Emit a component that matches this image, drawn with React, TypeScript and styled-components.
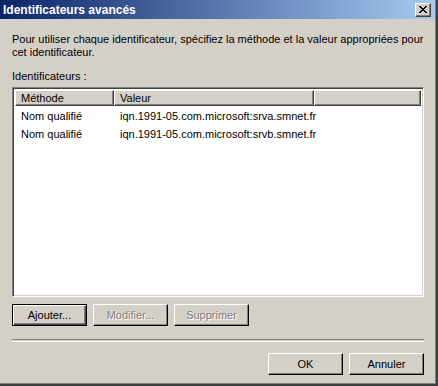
import React from 'react';
import styled, { createGlobalStyle } from 'styled-components';

const GlobalStyle = createGlobalStyle`
  html, body {
    margin: 0;
    padding: 0;
    background: #d4d0c8;
  }
`;

const Window = styled.div`
  width: 438px;
  height: 386px;
  box-sizing: border-box;
  background: #d4d0c8;
  border-right: 2px solid #404040;
  border-bottom: 2px solid #404040;
  box-shadow: inset -1px -1px 0 #808080;
  display: flex;
  flex-direction: column;
  font-family: 'Liberation Sans', Arial, sans-serif;
  font-size: 11px;
  color: #000;
`;

const TitleBar = styled.div`
  height: 19px;
  margin-right: 1px;
  background: linear-gradient(to right, #0a246a, #a6caf0);
  display: flex;
  align-items: center;
  justify-content: space-between;
  padding: 0 4px 0 3px;
`;

const TitleText = styled.div`
  color: #fff;
  font-weight: bold;
  font-size: 12px;
`;

const CloseButton = styled.div`
  width: 16px;
  height: 14px;
  box-sizing: border-box;
  background: #d4d0c8;
  border-top: 1px solid #fff;
  border-left: 1px solid #fff;
  border-right: 1px solid #404040;
  border-bottom: 1px solid #404040;
  box-shadow: inset -1px -1px 0 #808080;
  display: flex;
  align-items: center;
  justify-content: center;
`;

const Body = styled.div`
  flex: 1;
  display: flex;
  flex-direction: column;
  padding: 14px 12px 0 12px;
`;

const Text = styled.div<{ $gap?: number }>`
  line-height: 13px;
  margin-top: ${(p) => p.$gap ?? 0}px;
`;

const ListBox = styled.div`
  margin-top: 4px;
  height: 210px;
  box-sizing: border-box;
  background: #fff;
  border-top: 1px solid #808080;
  border-left: 1px solid #808080;
  border-right: 1px solid #fff;
  border-bottom: 1px solid #fff;
  box-shadow: inset 1px 1px 0 #404040, inset -1px -1px 0 #d4d0c8;
  padding: 2px;
  display: flex;
  flex-direction: column;
`;

const HeaderRow = styled.div`
  display: flex;
  height: 16px;
  margin-bottom: 1px;
`;

const HeaderCell = styled.div<{ $w?: number }>`
  ${(p) => (p.$w ? `width: ${p.$w}px;` : 'flex: 1;')}
  box-sizing: border-box;
  background: #d4d0c8;
  border-top: 1px solid #fff;
  border-left: 1px solid #fff;
  border-right: 1px solid #404040;
  border-bottom: 1px solid #404040;
  box-shadow: inset -1px -1px 0 #808080;
  padding-left: 5px;
  display: flex;
  align-items: center;
`;

const Row = styled.div`
  display: flex;
  height: 18px;
  align-items: center;
`;

const Cell = styled.div<{ $w: number }>`
  width: ${(p) => p.$w}px;
  padding-left: 6px;
  box-sizing: border-box;
  white-space: nowrap;
`;

const ButtonRow = styled.div<{ $end?: boolean; $top: number }>`
  display: flex;
  gap: 6px;
  justify-content: ${(p) => (p.$end ? 'flex-end' : 'flex-start')};
  margin-top: ${(p) => p.$top}px;
`;

const Button = styled.div<{ $default?: boolean; $disabled?: boolean }>`
  width: 75px;
  height: 22px;
  box-sizing: border-box;
  display: flex;
  align-items: center;
  justify-content: center;
  background: #d4d0c8;
  border-top: 1px solid ${(p) => (p.$default ? '#000' : '#fff')};
  border-left: 1px solid ${(p) => (p.$default ? '#000' : '#fff')};
  border-right: 1px solid #000;
  border-bottom: 1px solid #000;
  box-shadow: ${(p) =>
    p.$default
      ? 'inset 1px 1px 0 #fff, inset -1px -1px 0 #404040, inset -2px -2px 0 #808080'
      : 'inset -1px -1px 0 #808080'};
  color: ${(p) => (p.$disabled ? '#808080' : '#000')};
  text-shadow: ${(p) => (p.$disabled ? '1px 1px 0 #fff' : 'none')};
`;

const Separator = styled.div`
  margin-top: 13px;
  height: 1px;
  border-top: 1px solid #808080;
  border-bottom: 1px solid #fff;
`;

const rows = [
  { method: 'Nom qualifié', value: 'iqn.1991-05.com.microsoft:srva.smnet.fr' },
  { method: 'Nom qualifié', value: 'iqn.1991-05.com.microsoft:srvb.smnet.fr' },
];

const App = () => {
  return (
    <Window>
      <GlobalStyle />
      <TitleBar>
        <TitleText>Identificateurs avancés</TitleText>
        <CloseButton>
          <svg width="8" height="7" viewBox="0 0 8 7">
            <path d="M0 0h2v1h1v1h2V1h1V0h2v1H7v1H6v1H5v1h1v1h1v1h1v1H6V6H5V5H3v1H2v1H0V6h1V5h1V4h1V3H2V2H1V1H0z" fill="#000" />
          </svg>
        </CloseButton>
      </TitleBar>
      <Body>
        <Text>
          Pour utiliser chaque identificateur, spécifiez la méthode et la valeur appropriées pour
          <br />
          cet identificateur.
        </Text>
        <Text $gap={11}>Identificateurs :</Text>
        <ListBox>
          <HeaderRow>
            <HeaderCell $w={99}>Méthode</HeaderCell>
            <HeaderCell $w={200}>Valeur</HeaderCell>
            <HeaderCell />
          </HeaderRow>
          {rows.map((r, i) => (
            <Row key={i}>
              <Cell $w={99}>{r.method}</Cell>
              <Cell $w={200}>{r.value}</Cell>
            </Row>
          ))}
        </ListBox>
        <ButtonRow $top={7}>
          <Button $default>Ajouter...</Button>
          <Button $disabled>Modifier...</Button>
          <Button $disabled>Supprimer</Button>
        </ButtonRow>
        <Separator />
        <ButtonRow $end $top={11}>
          <Button>OK</Button>
          <Button>Annuler</Button>
        </ButtonRow>
      </Body>
    </Window>
  );
};

export default App;
